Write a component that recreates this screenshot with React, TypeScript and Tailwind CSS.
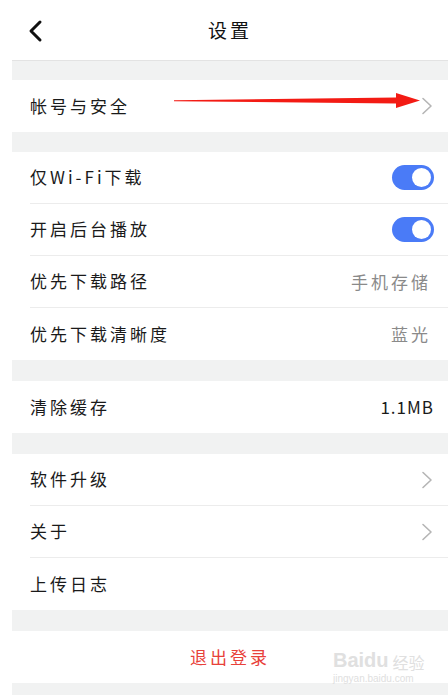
import React from 'react';

const font = { fontFamily: '"Noto Sans CJK SC", "Noto Sans", sans-serif' };

const Chevron = () => (
  <svg width="14" height="20" viewBox="0 0 14 20" fill="none" className="shrink-0">
    <path d="M3 2.5 L11 10 L3 17.5" stroke="#b5b5b5" strokeWidth="1.6" strokeLinecap="round" strokeLinejoin="round" />
  </svg>
);

const Toggle = () => (
  <div className="w-[42px] h-[25px] rounded-full bg-[#4a7bf7] flex items-center justify-end pr-[3px]">
    <div className="w-[19px] h-[19px] rounded-full bg-white" />
  </div>
);

const Value = ({ children }: { children: React.ReactNode }) => (
  <span className="text-[17px] tracking-[3px] text-[#8a8a8a] mr-[3px]">{children}</span>
);

const Row = ({ label, right, divider }: { label: string; right?: React.ReactNode; divider?: boolean }) => (
  <div className="bg-white pl-[18px]">
    <div className={`h-[52px] flex items-center justify-between pr-[14px] ${divider ? 'border-b border-[#ececec]' : ''}`}>
      <span className="text-[17px] tracking-[3px] text-[#1a1a1a] pb-[1px]">{label}</span>
      {right}
    </div>
  </div>
);

const Gap = ({ h }: { h: string }) => <div className={`bg-[#f1f2f2] ${h}`} />;

export default function App() {
  return (
    <div className="w-[448px] h-[695px] bg-white overflow-hidden relative" style={font}>
      <div className="h-[60px] flex items-center relative">
        <div className="pl-[26px] pt-[1px]">
          <svg width="20" height="24" viewBox="0 0 20 24" fill="none">
            <path d="M14 3 L5 12 L14 21" stroke="#111" strokeWidth="3" strokeLinecap="round" strokeLinejoin="round" />
          </svg>
        </div>
        <div className="absolute left-3 right-0 text-center text-[19px] tracking-[3px] text-[#111] pointer-events-none">设置</div>
      </div>
      <div className="ml-3 border-t border-[#e3e3e3]">
        <Gap h="h-[19px]" />
        <div className="relative">
          <Row label="帐号与安全" right={<Chevron />} />
          <svg className="absolute left-[162px] top-[13px]" width="250" height="16" viewBox="0 0 250 16">
            <path d="M0 7.2 L222 4.5 L222 0 L246 7.5 L222 15 L222 10.5 L0 8.2 Z" fill="#f31b14" />
          </svg>
        </div>
        <Gap h="h-[20px]" />
        <Row label="仅Wi-Fi下载" right={<Toggle />} divider />
        <Row label="开启后台播放" right={<Toggle />} divider />
        <Row label="优先下载路径" right={<Value>手机存储</Value>} divider />
        <Row label="优先下载清晰度" right={<Value>蓝光</Value>} />
        <Gap h="h-[21px]" />
        <Row label="清除缓存" right={<span className="text-[17px] text-[#1a1a1a] tracking-[1px]">1.1MB</span>} />
        <Gap h="h-[21px]" />
        <Row label="软件升级" right={<Chevron />} divider />
        <Row label="关于" right={<Chevron />} divider />
        <Row label="上传日志" />
        <Gap h="h-[21px]" />
        <div className="h-[52px] bg-white flex items-center justify-center">
          <span className="text-[17px] tracking-[3px] text-[#e8413a] pb-[1px]">退出登录</span>
        </div>
        <Gap h="h-[20px]" />
      </div>
      <div className="absolute left-[333px] top-[650px] text-[#e0e0e0] leading-none pointer-events-none">
        <div className="flex items-end gap-1">
          <span className="text-[20px] font-bold" style={{ fontFamily: '"Liberation Sans", sans-serif' }}>Baidu</span>
          <span className="text-[16px]">经验</span>
        </div>
        <div className="text-[10px] mt-[4px]" style={{ fontFamily: '"Liberation Sans", sans-serif' }}>jingyan.baidu.com</div>
      </div>
    </div>
  );
}
